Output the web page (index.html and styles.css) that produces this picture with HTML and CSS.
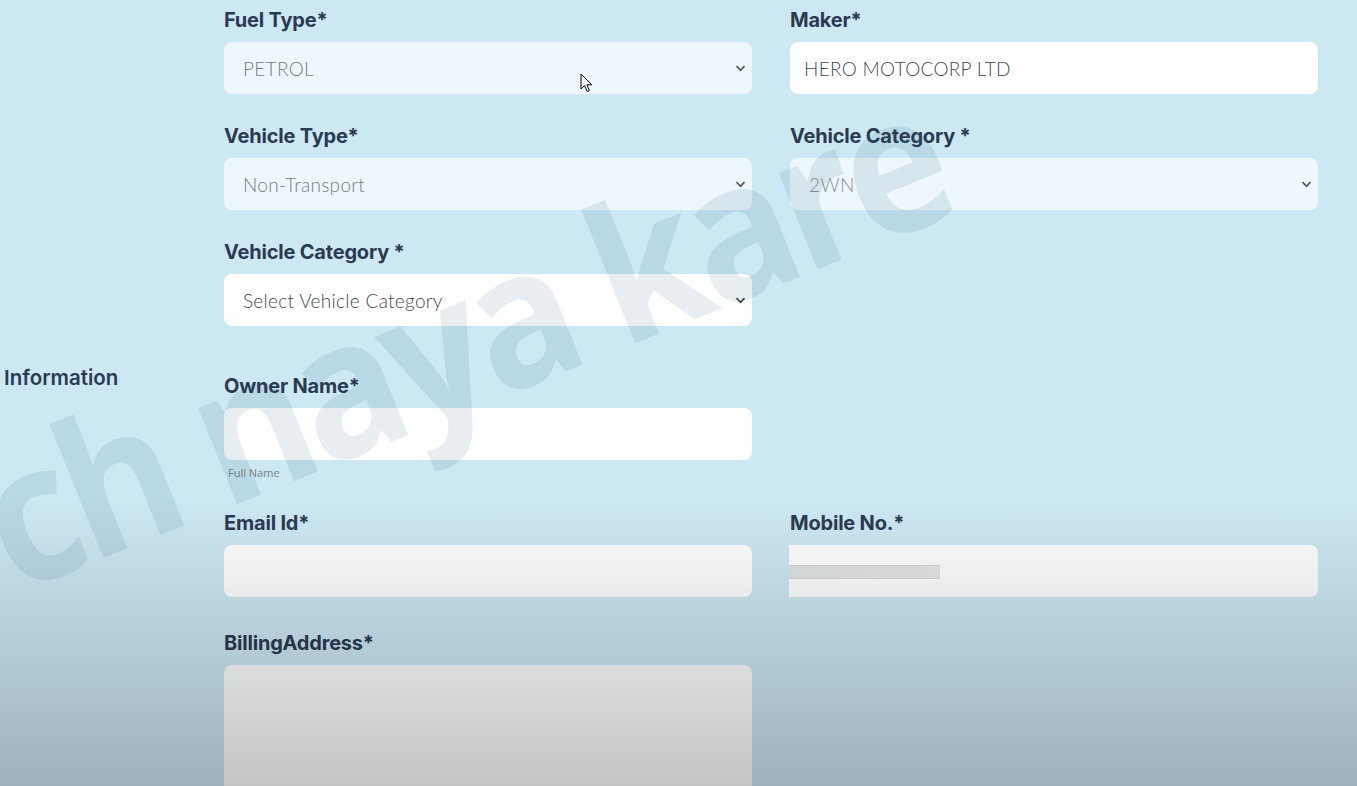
FILE: index.html
```html
<!DOCTYPE html>
<html lang="en">
<head>
<meta charset="utf-8">
<title>Vehicle Form</title>
<link rel="stylesheet" href="styles.css">
</head>
<body>
<div class="page">
  <section class="section">
    <div class="section-title"></div>
    <div class="fields">
      <div class="field">
        <label class="label">Fuel Type*</label>
        <div class="control select disabled"><span class="value muted">PETROL</span>
          <svg class="chev" width="11" height="7" viewBox="0 0 11 7"><path d="M1.5 1.2 L5.5 5.3 L9.5 1.2" fill="none" stroke="#555" stroke-width="1.7"/></svg>
        </div>
      </div>
      <div class="field">
        <label class="label">Maker*</label>
        <div class="control input"><span class="value">HERO MOTOCORP LTD</span></div>
      </div>
      <div class="field">
        <label class="label">Vehicle Type*</label>
        <div class="control select disabled"><span class="value muted">Non-Transport</span>
          <svg class="chev" width="11" height="7" viewBox="0 0 11 7"><path d="M1.5 1.2 L5.5 5.3 L9.5 1.2" fill="none" stroke="#555" stroke-width="1.7"/></svg>
        </div>
      </div>
      <div class="field">
        <label class="label">Vehicle Category *</label>
        <div class="control select disabled"><span class="value muted light">2WN</span>
          <svg class="chev" width="11" height="7" viewBox="0 0 11 7"><path d="M1.5 1.2 L5.5 5.3 L9.5 1.2" fill="none" stroke="#555" stroke-width="1.7"/></svg>
        </div>
      </div>
      <div class="field">
        <label class="label">Vehicle Category *</label>
        <div class="control select"><span class="value">Select Vehicle Category</span>
          <svg class="chev" width="11" height="7" viewBox="0 0 11 7"><path d="M1.5 1.2 L5.5 5.3 L9.5 1.2" fill="none" stroke="#444" stroke-width="1.7"/></svg>
        </div>
      </div>
    </div>
  </section>

  <section class="section owner">
    <div class="section-title">Information</div>
    <div class="fields">
      <div class="field">
        <label class="label">Owner Name*</label>
        <div class="control input"></div>
        <div class="helper">Full Name</div>
      </div>
      <div class="field"></div>
      <div class="field">
        <label class="label">Email Id*</label>
        <div class="control input"></div>
      </div>
      <div class="field">
        <label class="label">Mobile No.*</label>
        <div class="control input mobile"><span class="code-bar"></span></div>
      </div>
      <div class="field billing">
        <label class="label">BillingAddress*</label>
        <div class="control textarea"></div>
      </div>
    </div>
  </section>
</div>

<div class="watermark">ch naya kare</div>
<div class="vignette"></div>
<svg class="cursor" width="14" height="21" viewBox="0 0 14 21"><path d="M1 1 L1 16 L4.6 12.6 L7.2 18.6 L9.4 17.6 L6.9 11.8 L11.8 11.8 Z" fill="#fff" stroke="#000" stroke-width="1" stroke-linejoin="round"/></svg>
</body>
</html>
```

FILE: styles.css
```css
html, body {
  margin: 0;
  padding: 0;
}

body {
  width: 1357px;
  height: 786px;
  overflow: hidden;
  position: relative;
  background: #cce8f3;
  font-family: "Inter", "Lato", sans-serif;
  color: #2b3a52;
}

.page {
  padding-top: 8px;
  display: flex;
  flex-direction: column;
  gap: 48px;
}

.section {
  display: grid;
  grid-template-columns: 224px 1fr;
}

.section-title {
  font-family: "Inter", "Open Sans", sans-serif;
  font-weight: 600;
  font-size: 20.5px;
  line-height: 24px;
  color: #2b3a52;
  padding-left: 4px;
  margin-top: -8px;
}

.fields {
  display: grid;
  grid-template-columns: 528px 528px;
  column-gap: 38px;
  row-gap: 30px;
}

.owner .fields {
  row-gap: 31px;
}

.field {
  display: flex;
  flex-direction: column;
}

.label {
  font-family: "Inter", "Lato", sans-serif;
  font-weight: 700;
  font-size: 20px;
  line-height: 24px;
  letter-spacing: -0.2px;
  color: #2b3a52;
  margin-bottom: 10px;
}

.control {
  height: 52px;
  border-radius: 8px;
  background: #ffffff;
  display: flex;
  align-items: center;
  position: relative;
  box-sizing: border-box;
}

.input {
  padding-left: 14px;
}

.select {
  padding-left: 19px;
  padding-right: 6px;
  justify-content: space-between;
}

.select.disabled {
  background: #eef7fc;
}

.value {
  font-family: "Lato", sans-serif;
  font-weight: 300;
  font-size: 19px;
  letter-spacing: 0.3px;
  color: #444b52;
}

.value.muted {
  color: #787c80;
}

.value.light {
  color: #8a9196;
}

.helper {
  margin-top: 6px;
  padding-left: 4px;
  font-family: "Open Sans", sans-serif;
  font-size: 11px;
  line-height: 14px;
  color: #7a7f84;
}

.mobile {
  border-radius: 0 8px 8px 0;
  margin-left: -1px;
  padding-left: 0;
  align-items: flex-start;
}

.code-bar {
  display: block;
  width: 151px;
  height: 12px;
  margin-top: 20px;
  background: linear-gradient(to right, #dfe2e3, #e4e6e7);
  border-top: 1px solid #d2d5d6;
  border-bottom: 1px solid #d2d5d6;
}

.billing {
  margin-top: 3px;
}

.textarea {
  height: 160px;
}

.watermark {
  position: absolute;
  left: -12px;
  top: 431px;
  font-family: "Open Sans", sans-serif;
  font-weight: 700;
  font-size: 190px;
  letter-spacing: -8px;
  line-height: 1;
  white-space: nowrap;
  color: rgba(40, 95, 120, 0.11);
  transform-origin: 0 50%;
  transform: rotate(-22deg) scaleX(0.91);
  pointer-events: none;
}

.vignette {
  position: absolute;
  left: 0;
  top: 0;
  width: 1357px;
  height: 786px;
  background: linear-gradient(to bottom, rgba(0, 0, 0, 0) 0px, rgba(0, 0, 0, 0) 495px, rgba(0, 0, 0, 0.05) 560px, rgba(0, 0, 0, 0.23) 786px);
  pointer-events: none;
}

.cursor {
  position: absolute;
  left: 580px;
  top: 73px;
}
```
